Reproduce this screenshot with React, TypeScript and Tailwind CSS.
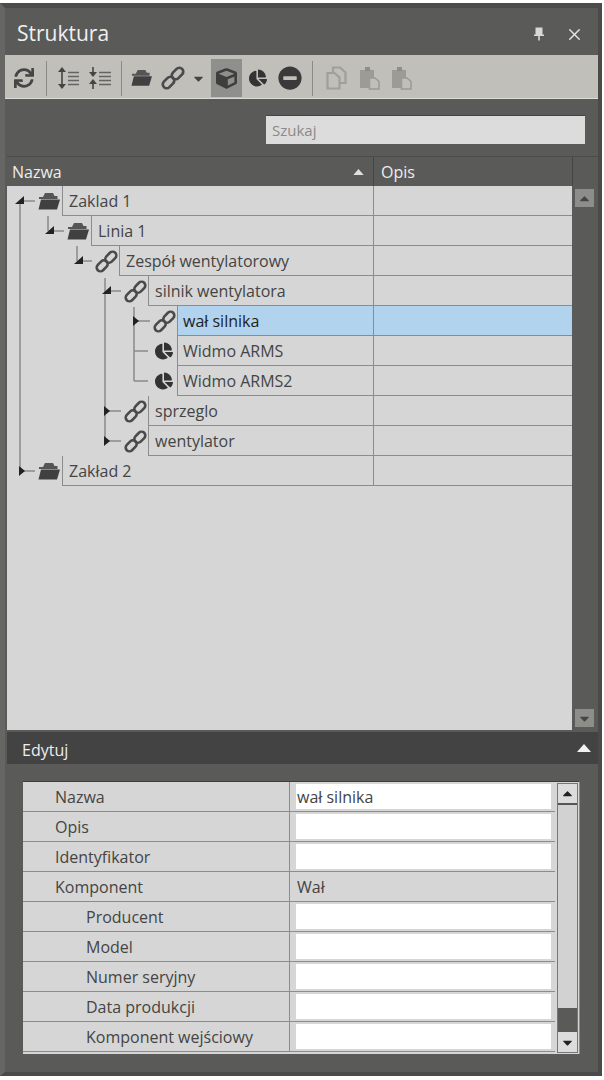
import React from 'react'
import { FaSync, FaCube, FaChartPie, FaMinusCircle, FaCaretDown, FaCaretUp } from 'react-icons/fa'
import { X } from 'lucide-react'

const font = { fontFamily: '"Open Sans", "Noto Sans", sans-serif' }

const ChainIcon: React.FC<{ size?: number }> = ({ size = 24 }) => (
  <svg width={size} height={size} viewBox="0 0 24 24" fill="none" stroke="#4a4a4a" strokeWidth="2.7">
    <rect x="12.6" y="1" width="7.8" height="13" rx="3.9" transform="rotate(45 16.5 7.5)" />
    <rect x="3.6" y="10" width="7.8" height="13" rx="3.9" transform="rotate(45 7.5 16.5)" />
  </svg>
)

const FolderIcon: React.FC<{ w?: number }> = ({ w = 22 }) => (
  <svg width={w} height={(w * 18) / 22} viewBox="0 0 22 18">
    <path d="M1 14V5H5L7 1H15L16.5 4H19.5V7H1Z" fill="#555" />
    <path d="M3 7.5H22L19 17.5H0.5Z" fill="#404040" />
  </svg>
)

const SpreadIcon = () => (
  <svg width="24" height="26" viewBox="0 0 24 26" fill="#454545" stroke="#454545">
    <path d="M5 2 9 7H1Z" stroke="none" />
    <path d="M5 24 1 19H9Z" stroke="none" />
    <path d="M5 5V21" strokeWidth="1.6" fill="none" />
    <path d="M11 7.5H22M11 11.5H22M11 15.5H22M11 19.5H22" strokeWidth="1.6" fill="none" opacity="0.75" />
  </svg>
)

const SqueezeIcon = () => (
  <svg width="24" height="26" viewBox="0 0 24 26" fill="#454545" stroke="#454545">
    <path d="M5 12 1 7H9Z" stroke="none" />
    <path d="M5 14 9 19H1Z" stroke="none" />
    <path d="M5 2V8M5 18V24" strokeWidth="1.6" fill="none" />
    <path d="M11 7.5H23M11 11.5H23M11 15.5H23M11 19.5H23" strokeWidth="1.6" fill="none" opacity="0.75" />
  </svg>
)

const PinIcon = () => (
  <svg width="12" height="14" viewBox="0 0 12 14" fill="#d8d8d4">
    <path d="M2.5 0.5H9.5V7.5H11V9H1V7.5H2.5Z" />
    <path d="M5.2 9H6.8V13.5H5.2Z" />
  </svg>
)

const CopyIcon = () => (
  <svg width="21" height="24" viewBox="0 0 21 24" fill="#c0bfba" stroke="#a09f9b" strokeWidth="2.2">
    <path d="M7 1.5H14L19.5 6.5V17H7Z" />
    <path d="M1.5 7H8.5L13.5 11.5V22.5H1.5Z" />
  </svg>
)

const PasteIcon = () => (
  <svg width="21" height="24" viewBox="0 0 21 24">
    <path d="M1 4H6V2H11V4H15V22H1Z" fill="#9c9b97" />
    <path d="M6 1H11V5H6Z" fill="#8f8e8a" />
    <path d="M10.5 12H16L20 15.5V23H10.5Z" fill="#c0bfba" stroke="#9c9b97" strokeWidth="1.6" />
  </svg>
)

const Sep = ({ w }: { w: number }) => (
  <div className="flex justify-center shrink-0" style={{ width: w }}>
    <div className="w-px h-[35px] bg-[#8a8a86]" />
  </div>
)

const Tool: React.FC<{ w: number; active?: boolean; children: React.ReactNode }> = ({ w, active, children }) => (
  <div className={`flex items-center justify-center shrink-0 h-[38px] ${active ? 'bg-[#8f8f8c]' : ''}`} style={{ width: w }}>
    {children}
  </div>
)

const Toolbar = () => (
  <div className="flex items-center h-[44px] pl-px pt-[3px] bg-[#c0bfba] border-b border-[#dcdbd7] text-[#454545]">
    <Tool w={36}><FaSync size={20} /></Tool>
    <Sep w={8} />
    <Tool w={38}><SpreadIcon /></Tool>
    <Tool w={24}><SqueezeIcon /></Tool>
    <Sep w={18} />
    <Tool w={22}><FolderIcon w={21} /></Tool>
    <Tool w={42}><ChainIcon /></Tool>
    <Tool w={8}><FaCaretDown size={15} className="shrink-0" /></Tool>
    <div className="w-[9px] shrink-0" />
    <Tool w={31} active><FaCube size={21} className="text-[#3e3e3e]" /></Tool>
    <Tool w={32}><FaChartPie size={18} className="text-[#333]" /></Tool>
    <Tool w={32}><FaMinusCircle size={24} className="text-[#3a3a3a]" /></Tool>
    <Sep w={12} />
    <Tool w={36}><CopyIcon /></Tool>
    <Tool w={30}><PasteIcon /></Tool>
    <Tool w={34}><PasteIcon /></Tool>
  </div>
)

type TreeRow = {
  name: string
  left: number
  icon: 'folder' | 'chain' | 'pie'
  guides: React.ReactNode
  selected?: boolean
}

const G = '#8a8a8a'
const V = (x: number, y1 = 0, y2 = 30) => <path d={`M${x} ${y1}V${y2}`} stroke={G} strokeWidth="1.5" />
const stub = (x1: number, x2: number) => <path d={`M${x1} 15H${x2}`} stroke={G} strokeWidth="1.5" />
// expanded triangle points at the lower right, collapsed one points right
const Open = (x: number) => <path d={`M${x + 5} 10V18H${x - 4}Z`} fill="#222" />
const Closed = (x: number) => <path d={`M${x - 1} 10L${x + 5} 15L${x - 1} 20Z`} fill="#222" />

const rows: TreeRow[] = [
  { name: 'Zaklad 1', left: 62, icon: 'folder', guides: <>{V(13, 15)}{stub(15, 28)}{Open(12)}</> },
  { name: 'Linia 1', left: 91, icon: 'folder', guides: <>{V(13)}{V(41, 0, 15)}{stub(43, 57)}{Open(42)}</> },
  { name: 'Zespół wentylatorowy', left: 119, icon: 'chain', guides: <>{V(13)}{V(70, 0, 15)}{stub(72, 85)}{Open(71)}</> },
  { name: 'silnik wentylatora', left: 148, icon: 'chain', guides: <>{V(13)}{V(98, 2)}{stub(100, 114)}{Open(99)}</> },
  { name: 'wał silnika', left: 177, icon: 'chain', selected: true, guides: <>{V(13)}{V(98)}{V(127, 1)}{stub(129, 143)}{Closed(127)}</> },
  { name: 'Widmo ARMS', left: 177, icon: 'pie', guides: <>{V(13)}{V(98)}{V(127)}{stub(127, 141)}</> },
  { name: 'Widmo ARMS2', left: 177, icon: 'pie', guides: <>{V(13)}{V(98)}{V(127, 0, 15)}{stub(127, 141)}</> },
  { name: 'sprzeglo', left: 148, icon: 'chain', guides: <>{V(13)}{V(98)}{stub(100, 114)}{Closed(98)}</> },
  { name: 'wentylator', left: 148, icon: 'chain', guides: <>{V(13)}{V(98, 0, 15)}{stub(100, 114)}{Closed(98)}</> },
  { name: 'Zakład 2', left: 62, icon: 'folder', guides: <>{V(13, 0, 15)}{stub(15, 28)}{Closed(13)}</> },
]

const RowIcon: React.FC<{ icon: TreeRow['icon'] }> = ({ icon }) => {
  if (icon === 'folder') return <FolderIcon />
  if (icon === 'pie') return <FaChartPie size={18} className="text-[#333]" />
  return <ChainIcon size={23} />
}

const Tree = () => (
  <div className="flex flex-col w-[565px] bg-[#d6d6d6] text-[16px] text-[#444]">
    {rows.map((r) => (
      <div key={r.name} className="flex h-[30px]">
        <div className="relative shrink-0 h-full" style={{ width: r.left - 7 }}>
          <svg width={r.left - 7} height="30" className="block">{r.guides}</svg>
          <div className="absolute right-[1px] top-0 h-full w-[24px] flex items-center justify-center"><RowIcon icon={r.icon} /></div>
        </div>
        <div
          className={`flex items-center shrink-0 border-l-[1.5px] border-b-[1.5px] border-[#8c8c8c] ${r.left === 177 ? 'pl-[5px]' : 'pl-[6px]'} ${r.selected ? 'bg-[#b1d3ee] text-[#222]' : ''}`}
          style={{ width: 373 - r.left }}
        >
          {r.name}
        </div>
        <div className={`flex-1 border-l-[1.5px] border-b-[1.5px] border-[#8c8c8c] ${r.selected ? 'bg-[#b1d3ee]' : ''}`} />
      </div>
    ))}
  </div>
)

const ScrollBtn: React.FC<{ up?: boolean }> = ({ up }) => (
  <div className="w-[19px] h-[18px] bg-[#8d8d89] flex items-center justify-center text-[#454545]">
    {up ? <FaCaretUp size={15} /> : <FaCaretDown size={15} />}
  </div>
)

type Prop = { label: string; value?: string; sub?: boolean; plain?: boolean }

const props: Prop[] = [
  { label: 'Nazwa', value: 'wał silnika' },
  { label: 'Opis' },
  { label: 'Identyfikator' },
  { label: 'Komponent', value: 'Wał', plain: true },
  { label: 'Producent', sub: true },
  { label: 'Model', sub: true },
  { label: 'Numer seryjny', sub: true },
  { label: 'Data produkcji', sub: true },
  { label: 'Komponent wejściowy', sub: true },
]

const EditForm = () => (
  <div className="flex w-[557px] h-[273px] ml-[16px] mt-[17px] bg-[#d6d6d6] border-t border-[#3e3e3e] border-r border-r-[#8c8c8c] text-[16px] text-[#444]">
    <div className="flex flex-col w-[532px] shrink-0">
      {props.map((p) => (
        <div key={p.label} className="flex h-[30px] shrink-0 border-b-[1.5px] border-[#8c8c8c]">
          <div className={`flex items-center w-[267px] shrink-0 border-r-[1.5px] border-[#8c8c8c] ${p.sub ? 'pl-[63px]' : 'pl-[32px]'}`}>{p.label}</div>
          <div className="flex-1 pl-[6px] pr-[4px] py-[2px] flex items-stretch">
            <div className={`flex-1 flex items-center ${p.plain ? '' : 'bg-white'}`}>
              <span className="pl-px">{p.value}</span>
            </div>
          </div>
        </div>
      ))}
    </div>
    <div className="flex flex-col w-[21px] ml-[2px] h-[270px] mt-px border border-[#777] bg-[#d2d2d2]">
      <div className="h-[21px] flex items-center justify-center bg-[#dcdcdc] border-b-2 border-[#555] text-[#222]"><FaCaretUp size={15} /></div>
      <div className="flex-1" />
      <div className="h-[24px] bg-[#5a5a58]" />
      <div className="h-[20px] flex items-center justify-center bg-[#dcdcdc] text-[#222]"><FaCaretDown size={15} /></div>
    </div>
  </div>
)

export default function App() {
  return (
    <div className="bg-white h-[1080px] pt-[3px] pb-[4px] pr-[2px]" style={font}>
      <div className="h-full flex flex-col bg-[#5a5a58] border-l-[5px] border-r-[4px] border-t-[5px] border-b-[4px] border-l-[#666664] border-r-[#4a4a48] border-t-[#4c4c4a] border-b-[#4a4a48]">
        <div className="flex items-center h-[47px] shrink-0 pt-[5px] pl-[12px] pr-[14px] text-white">
          <span className="text-[21px] text-[#f0f0f0] flex-1">Struktura</span>
          <PinIcon />
          <X size={19} strokeWidth={1.8} className="ml-[20px] text-[#e4e4e0]" />
        </div>
        <Toolbar />
        <div className="flex-1 flex flex-col pl-[2px]">
          <div className="h-[57px] shrink-0 pt-[16px] pl-[259px]">
            <div className="w-[319px] h-[29px] bg-[#dcdcdc] border-t border-[#444] pl-[6px] flex items-center text-[15px] text-[#8a8a8a]">Szukaj</div>
          </div>
          <div className="flex h-[30px] shrink-0 border-t-[1.5px] border-[#4c4c4a] text-[16px] text-[#ededed]">
            <div className="relative flex items-center w-[367px] pl-[5px] border-r-[1.5px] border-[#444]">
              Nazwa
              <svg width="11" height="6" viewBox="0 0 12 7" className="absolute right-[9px] top-[12px]"><path d="M6 0 12 7H0Z" fill="#e0e0e0" /></svg>
            </div>
            <div className="flex items-center w-[199px] pl-[7px] border-r-[1.5px] border-[#444]">Opis</div>
          </div>
          <div className="flex h-[544px] shrink-0">
            <div className="flex flex-col bg-[#d6d6d6] w-[565px]"><Tree /></div>
            <div className="flex flex-col justify-between w-[24px] py-[3px] pl-[3px]">
              <ScrollBtn up />
              <ScrollBtn />
            </div>
          </div>
          <div className="flex items-center justify-between h-[32px] mt-[2px] shrink-0 pt-[3px] pl-[15px] pr-[7px] bg-[#434343] text-[16px] text-[#ededed]">
            Edytuj
            <svg width="14" height="8" viewBox="0 0 14 8" className="mb-[4px]"><path d="M7 0 14 8H0Z" fill="#f2f2f2" /></svg>
          </div>
          <EditForm />
        </div>
      </div>
    </div>
  )
}
